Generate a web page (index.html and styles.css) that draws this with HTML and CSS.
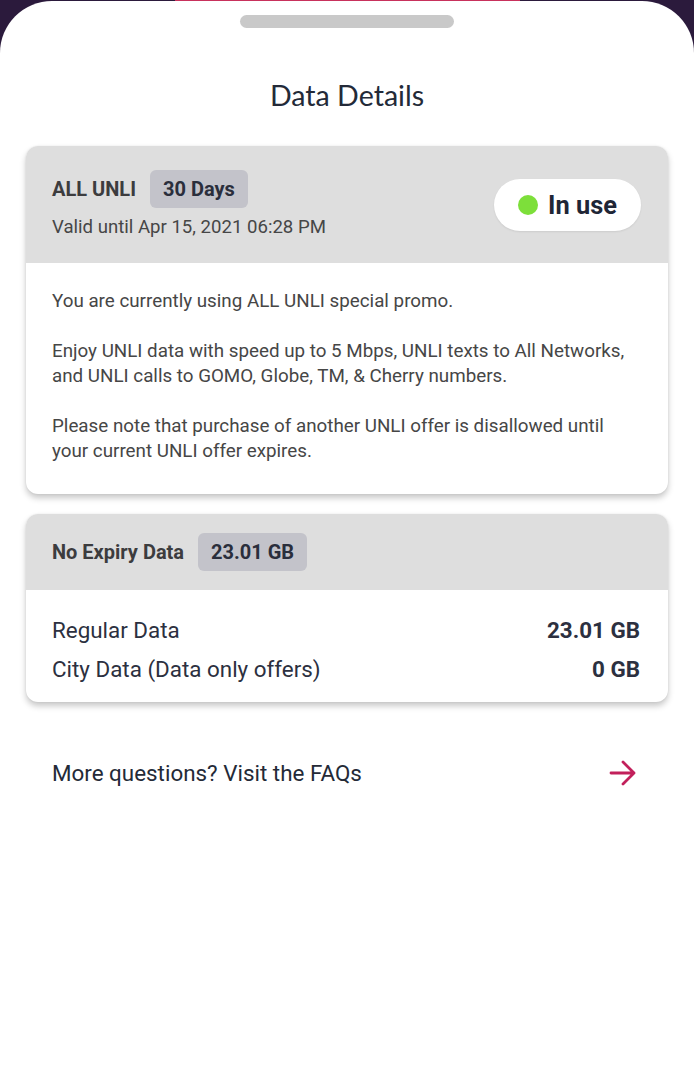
FILE: index.html
```html
<!DOCTYPE html>
<html lang="en">
<head>
<meta charset="utf-8">
<title>Data Details</title>
<link rel="stylesheet" href="styles.css">
</head>
<body>
<div class="backdrop"><div class="peek"></div></div>
<main class="sheet">
  <div class="handle"></div>
  <h1 class="title">Data Details</h1>

  <section class="card">
    <header class="card-head">
      <div class="head-info">
        <div class="head-row">
          <span class="plan">ALL UNLI</span>
          <span class="badge">30 Days</span>
        </div>
        <div class="valid">Valid until Apr 15, 2021 06:28 PM</div>
      </div>
      <div class="status"><span class="dot"></span><span class="status-text">In use</span></div>
    </header>
    <div class="card-body">
      <p>You are currently using ALL UNLI special promo.</p>
      <p>Enjoy UNLI data with speed up to 5 Mbps, UNLI texts to All Networks,<br>and UNLI calls to GOMO, Globe, TM, &amp; Cherry numbers.</p>
      <p>Please note that purchase of another UNLI offer is disallowed until<br>your current UNLI offer expires.</p>
    </div>
  </section>

  <section class="card">
    <header class="card-head compact">
      <div class="head-row">
        <span class="plan">No Expiry Data</span>
        <span class="badge">23.01 GB</span>
      </div>
    </header>
    <div class="card-body rows">
      <div class="row"><span>Regular Data</span><span class="value">23.01 GB</span></div>
      <div class="row"><span>City Data (Data only offers)</span><span class="value">0 GB</span></div>
    </div>
  </section>

  <a class="faq" href="#">
    <span>More questions? Visit the FAQs</span>
    <svg class="arrow" width="30" height="30" viewBox="0 0 30 30" aria-hidden="true">
      <path d="M3 15 H26 M15 4 L26 15 L15 26" fill="none" stroke="#c2205b" stroke-width="2.8" stroke-linecap="round" stroke-linejoin="round"/>
    </svg>
  </a>
</main>
</body>
</html>
```
FILE: styles.css
```css
* { box-sizing: border-box; }

html, body {
  margin: 0;
  padding: 0;
}

body {
  background: #2b1a3c;
  font-family: Roboto, "Liberation Sans", sans-serif;
  color: #454545;
  min-height: 1080px;
}

.backdrop {
  height: 1px;
  display: flex;
  justify-content: center;
}

.peek {
  width: 345px;
  height: 1px;
  background: #c8315c;
}

.sheet {
  background: #ffffff;
  border-radius: 52px 52px 0 0;
  min-height: 1079px;
  padding: 14px 26px 40px;
  display: flex;
  flex-direction: column;
}

.handle {
  width: 214px;
  height: 13px;
  border-radius: 7px;
  background: #c9c9c9;
  align-self: center;
}

.title {
  margin: 50px 0 34px;
  text-align: center;
  font-family: Lato, "Open Sans", sans-serif;
  font-weight: 400;
  font-size: 28.6px;
  line-height: 34px;
  color: #232a38;
}

.card {
  border-radius: 12px;
  background: #fff;
  box-shadow: 0 4px 6px rgba(0, 0, 0, 0.22), 0 0 2px rgba(0, 0, 0, 0.08);
  overflow: hidden;
  margin-bottom: 20px;
}

.card-head {
  background: #dedede;
  padding: 24px 27px 24px 26px;
  display: flex;
  align-items: center;
  justify-content: space-between;
}

.card-head.compact {
  padding: 19px 26px;
}

.head-row {
  display: flex;
  align-items: center;
  gap: 14px;
}

.plan {
  font-weight: 700;
  font-size: 20px;
  color: #3c3c3e;
}

.badge {
  height: 38px;
  display: inline-flex;
  align-items: center;
  padding: 0 13px;
  border-radius: 6px;
  background: #c3c3ca;
  font-weight: 700;
  font-size: 20px;
  color: #2a2e3c;
}

.valid {
  margin-top: 7px;
  font-size: 18.6px;
  line-height: 24px;
  color: #464646;
}

.status {
  height: 52px;
  width: 147px;
  border-radius: 26px;
  background: #ffffff;
  display: flex;
  align-items: center;
  padding-left: 24px;
  gap: 10px;
  box-shadow: 0 1px 2px rgba(0, 0, 0, 0.08);
}

.dot {
  width: 20px;
  height: 20px;
  border-radius: 50%;
  background: #7ddf3a;
}

.status-text {
  font-weight: 700;
  font-size: 25.4px;
  color: #1f2636;
}

.card-body {
  padding: 26px 20px 30px 26px;
  font-size: 18.8px;
  line-height: 25px;
  color: #464646;
  white-space: nowrap;
}

.card-body p {
  margin: 0 0 25px;
}

.card-body p:last-child {
  margin-bottom: 0;
}

.card-body.rows {
  padding: 25px 28px 18px 26px;
  display: flex;
  flex-direction: column;
  gap: 9px;
  font-size: 22.4px;
  line-height: 30px;
  color: #2c3040;
}

.row {
  display: flex;
  justify-content: space-between;
}

.value {
  font-weight: 700;
}

.faq {
  margin-top: 21px;
  display: flex;
  align-items: center;
  justify-content: space-between;
  padding: 0 30px 0 26px;
  height: 60px;
  text-decoration: none;
  font-size: 22.4px;
  color: #242a37;
}
```
